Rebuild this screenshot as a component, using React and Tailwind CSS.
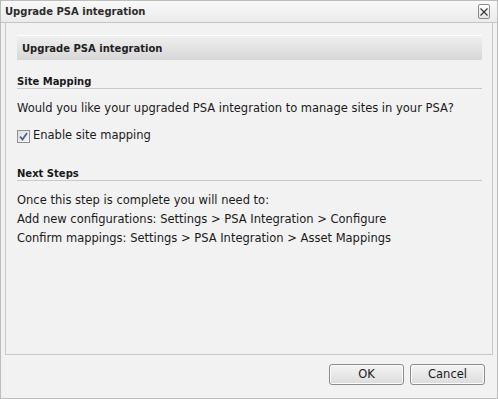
import React from 'react';

const FONT = { fontFamily: 'Tahoma, "DejaVu Sans", Verdana, sans-serif' };

function CloseButton() {
  return (
    <button className="flex h-[15px] w-[12px] items-center justify-center rounded-[2px] border border-[#8a8a8a] bg-gradient-to-b from-[#fdfdfd] to-[#e4e4e4] p-0">
      <svg width="8" height="8" viewBox="0 0 8 8">
        <path d="M0.5 0.5 L7.5 7.5 M7.5 0.5 L0.5 7.5" stroke="#333" strokeWidth="1.1" />
      </svg>
    </button>
  );
}

function Checkbox() {
  return (
    <span className="flex h-[13px] w-[13px] items-center justify-center border border-[#8e8f8f] bg-gradient-to-br from-[#dcdcdc] to-[#fbfbfb]">
      <svg width="9" height="9" viewBox="0 0 9 9">
        <path d="M1 4.5 L3.5 7.5 L8 1" fill="none" stroke="#4a5f97" strokeWidth="1.8" />
      </svg>
    </span>
  );
}

function SectionTitle({ children, className = '' }) {
  return (
    <div className={`border-b border-[#c9c9c9] text-[10px] font-bold leading-[12px] text-[#1a1a1a] ${className}`}>
      {children}
    </div>
  );
}

function DlgButton({ children }) {
  return (
    <button className="h-[21px] w-[75px] rounded-[3px] border border-[#8c8c8c] bg-gradient-to-b from-[#f4f4f4] to-[#dcdcdc] text-[11.5px] text-[#1a1a1a] shadow-[inset_0_0_0_1px_#fbfbfb]">
      {children}
    </button>
  );
}

export default function App() {
  return (
    <div
      style={FONT}
      className="flex h-[399px] w-[498px] flex-col border border-[#bdbdbd] bg-[#f2f2f2] text-[11.5px] text-[#1a1a1a]"
    >
      <div className="flex h-[22px] shrink-0 items-center justify-between border-b border-[#c4c4c4] bg-gradient-to-b from-[#f9f9f9] to-[#ebebeb] pl-[4px] pr-[7px]">
        <span className="text-[10px] font-bold text-[#2c2c2c]">Upgrade PSA integration</span>
        <CloseButton />
      </div>

      <div className="flex flex-1 px-[4px]">
        <div className="flex-1 border-x border-b border-[#c8c8c8] pl-[11px] pr-[10px] pt-[12px]">
          <div className="flex h-[25px] items-center border-t border-white bg-gradient-to-b from-[#efefef] to-[#d7d7d7] pl-[5px] text-[10px] font-bold text-[#1f1f1f]">
            Upgrade PSA integration
          </div>

          <SectionTitle className="mt-[16px]">Site Mapping</SectionTitle>
          <p className="mt-[11px] leading-[16px]">
            Would you like your upgraded PSA integration to manage sites in your PSA?
          </p>
          <label className="mt-[12px] flex h-[16px] items-center gap-[3px]">
            <Checkbox />
            <span>Enable site mapping</span>
          </label>

          <SectionTitle className="mt-[24px]">Next Steps</SectionTitle>
          <div className="mt-[10px] leading-[19px]">
            <div>Once this step is complete you will need to:</div>
            <div>Add new configurations: Settings &gt; PSA Integration &gt; Configure</div>
            <div>Confirm mappings: Settings &gt; PSA Integration &gt; Asset Mappings</div>
          </div>
        </div>
      </div>

      <div className="flex h-[43px] shrink-0 items-start justify-end gap-[6px] pr-[12px] pt-[9px]">
        <DlgButton>OK</DlgButton>
        <DlgButton>Cancel</DlgButton>
      </div>
    </div>
  );
}
